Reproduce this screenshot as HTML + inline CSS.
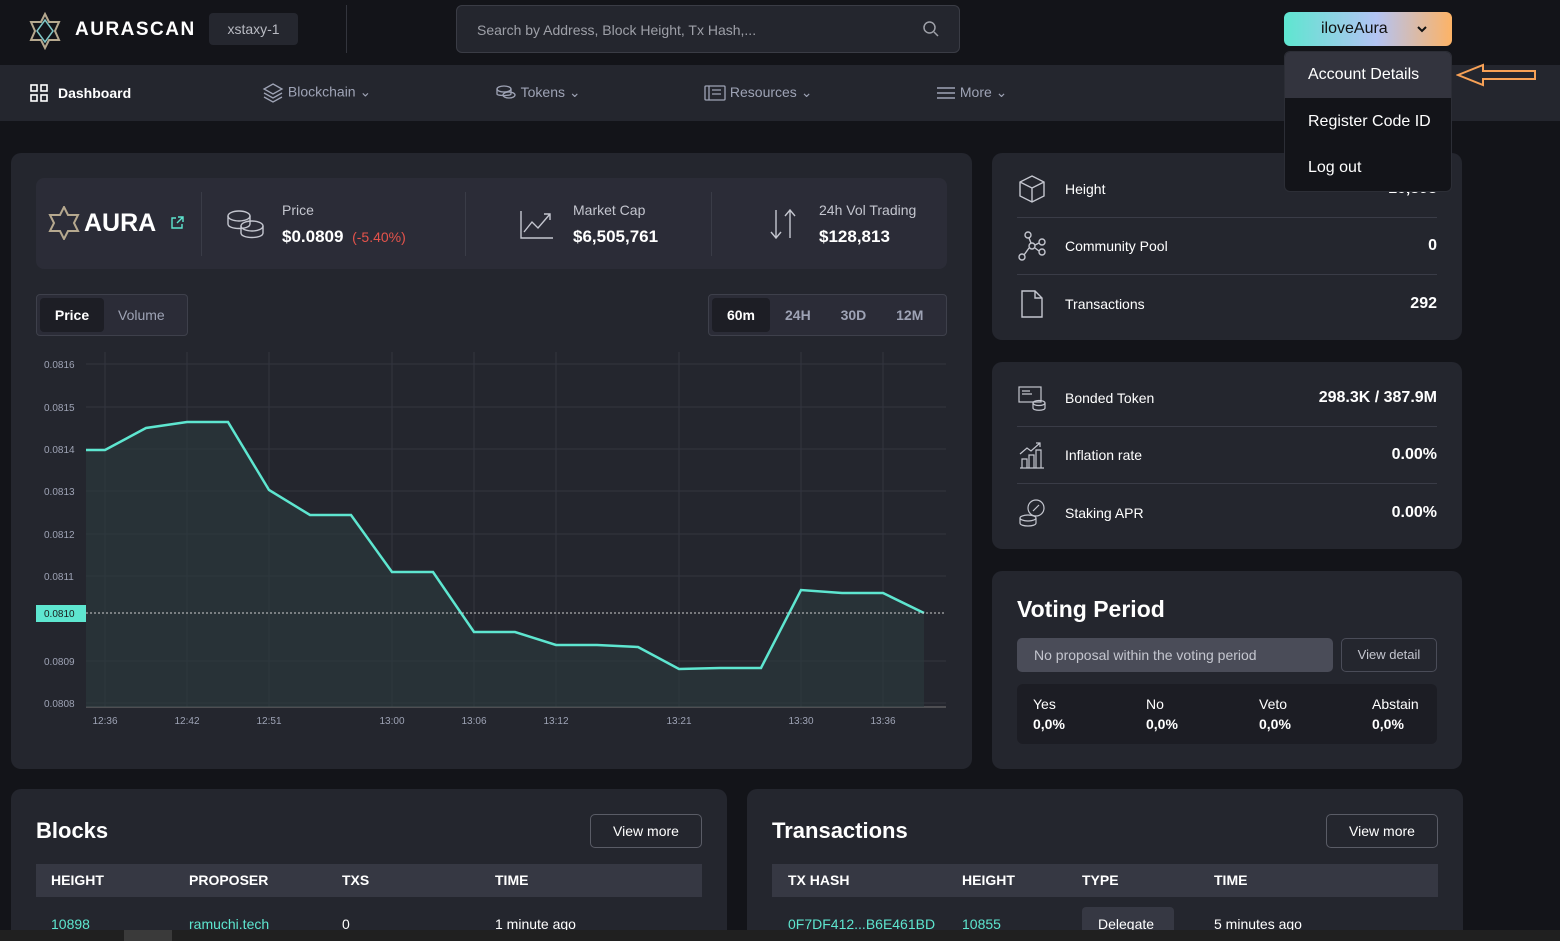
<!DOCTYPE html>
<html><head><meta charset="utf-8"><style>
*{box-sizing:border-box;margin:0;padding:0}
html,body{width:1560px;height:941px;overflow:hidden}
body{background:#131419;font-family:"Liberation Sans",sans-serif;color:#fff;position:relative}
.abs{position:absolute}
.card{position:absolute;background:#24262e;border-radius:10px}
.muted{color:#c4c6cf}
.row{position:absolute;left:25px;right:25px;height:57px;display:flex;align-items:center;font-size:14px;border-bottom:1px solid #3a3c47}
.row .v{margin-left:auto;font-weight:bold;font-size:16px}
.row svg{margin-right:18px}
.th{position:absolute;font-size:14px;font-weight:bold;top:872px}
.td{position:absolute;font-size:14px;top:916px}
.g{color:#5ee6d0}
</style></head><body>
<div class="abs" style="left:0;top:0;width:1560px;height:65px;background:#131419"></div>
<svg class="abs" style="left:27px;top:12px" width="36" height="38" viewBox="0 0 36 38"><path d="M18 2L22 10 32 10 28 19 32 28 22 28 18 36 14 28 4 28 8 19 4 10 14 10Z" fill="none" stroke="#b6a98f" stroke-width="2"/><path d="M18 8L26 19 18 30 10 19Z" fill="none" stroke="#7fc7c7" stroke-width="1.5"/></svg>
<div class="abs" style="left:75px;top:19px;font-size:19px;letter-spacing:1.5px;font-weight:bold">AURASCAN</div>
<div class="abs" style="left:209px;top:13px;width:89px;height:32px;background:#25272f;border-radius:4px;color:#b8bac2;font-size:14px;text-align:center;line-height:32px">xstaxy-1</div>
<div class="abs" style="left:346px;top:5px;width:1px;height:48px;background:#33353d"></div>
<div class="abs" style="left:456px;top:5px;width:504px;height:48px;background:#24262e;border:1px solid #3a3c45;border-radius:6px;color:#9ea0a8;font-size:14px;line-height:48px;padding-left:20px">Search by Address, Block Height, Tx Hash,...</div>
<svg class="abs" style="left:922px;top:20px" width="18" height="18" viewBox="0 0 18 18"><circle cx="7.5" cy="7.5" r="5.5" fill="none" stroke="#9ea0a8" stroke-width="1.5"/><path d="M12 12l4 4" stroke="#9ea0a8" stroke-width="1.5"/></svg>
<div class="abs" style="left:1284px;top:12px;width:168px;height:34px;border-radius:6px;background:linear-gradient(90deg,#5ee6d0,#b3c3f3 55%,#fdb366);color:#111;font-size:16px;line-height:34px;padding-left:37px">iloveAura</div>
<svg class="abs" style="left:1416px;top:24px" width="12" height="10" viewBox="0 0 12 10"><path d="M2 3l4 4 4-4" fill="none" stroke="#111" stroke-width="2"/></svg>
<div class="abs" style="left:0;top:65px;width:1560px;height:56px;background:#24262e"></div>
<svg class="abs" style="left:30px;top:84px" width="18" height="18" viewBox="0 0 18 18" fill="none" stroke="#fff" stroke-width="1.6"><rect x="1" y="1" width="6" height="6"/><rect x="11" y="1" width="6" height="6"/><rect x="1" y="11" width="6" height="6"/><rect x="11" y="11" width="6" height="6"/></svg>
<div class="abs" style="left:58px;top:85px;font-size:14px;font-weight:bold">Dashboard</div>
<div class="abs" style="left:262px;top:82px;color:#9ea3b5;font-size:14px">
<svg width="22" height="22" viewBox="0 0 22 22" fill="none" stroke="#9ea3b5" stroke-width="1.3" style="vertical-align:middle"><path d="M11 2L20 7 11 12 2 7Z M2 11l9 5 9-5 M2 15l9 5 9-5"/></svg> Blockchain &#8964;</div>
<div class="abs" style="left:495px;top:84px;color:#9ea3b5;font-size:14px"><svg width="22" height="18" viewBox="0 0 22 18" fill="none" stroke="#9ea3b5" stroke-width="1.3" style="vertical-align:middle"><ellipse cx="9" cy="5" rx="7" ry="3"/><path d="M2 5v5c0 2 14 2 14 0V5"/><ellipse cx="14" cy="11" rx="6" ry="3"/></svg> Tokens &#8964;</div>
<div class="abs" style="left:704px;top:84px;color:#9ea3b5;font-size:14px"><svg width="22" height="18" viewBox="0 0 22 18" fill="none" stroke="#9ea3b5" stroke-width="1.3" style="vertical-align:middle"><rect x="1" y="2" width="20" height="14" rx="1"/><path d="M5 2v14M8 6h9M8 10h9"/></svg> Resources &#8964;</div>
<div class="abs" style="left:936px;top:84px;color:#9ea3b5;font-size:14px"><svg width="20" height="16" viewBox="0 0 20 16" stroke="#9ea3b5" stroke-width="1.5" style="vertical-align:middle"><path d="M1 3h18M1 8h18M1 13h18"/></svg> More &#8964;</div>
<div class="abs" style="left:1284px;top:51px;width:168px;height:141px;background:#131419;border:1px solid #2c2e36;border-radius:6px;overflow:hidden;z-index:5;font-size:16px">
<div style="height:46px;background:#33343e;padding-left:23px;line-height:46px">Account Details</div>
<div style="height:48px;padding-left:23px;line-height:48px">Register Code ID</div>
<div style="height:48px;padding-left:23px;line-height:44px">Log out</div></div>
<svg class="abs" style="left:1456px;top:62px;z-index:6" width="82" height="26" viewBox="0 0 82 26"><path d="M2 13L27 3V9H79V17H27V23Z" fill="none" stroke="#f7a156" stroke-width="2"/></svg>
<div class="card" style="left:11px;top:153px;width:961px;height:616px"></div>
<div class="abs" style="left:36px;top:178px;width:911px;height:91px;background:#2b2c37;border-radius:8px"></div>
<svg class="abs" style="left:48px;top:206px" width="32" height="34" viewBox="0 0 32 34"><path d="M16 1L20 9 30 9 26 17 30 25 20 25 16 33 12 25 2 25 6 17 2 9 12 9Z" fill="none" stroke="#b6a98f" stroke-width="2"/></svg>
<div class="abs" style="left:84px;top:209px;font-size:25px;font-weight:bold">AURA</div>
<svg class="abs" style="left:170px;top:216px" width="14" height="14" viewBox="0 0 14 14" fill="none" stroke="#5ee6d0" stroke-width="1.4"><path d="M6 2H2v10h10V8M8 1h5v5M13 1L7 7"/></svg>
<div class="abs" style="left:201px;top:192px;width:1px;height:64px;background:#3a3c47"></div>
<div class="abs" style="left:465px;top:192px;width:1px;height:64px;background:#3a3c47"></div>
<div class="abs" style="left:711px;top:192px;width:1px;height:64px;background:#3a3c47"></div>
<svg class="abs" style="left:226px;top:208px" width="40" height="32" viewBox="0 0 40 32" fill="none" stroke="#c4c6cf" stroke-width="1.4"><ellipse cx="13" cy="8" rx="11" ry="5"/><path d="M2 8v8c0 6 22 6 22 0V8"/><ellipse cx="26" cy="18" rx="11" ry="5"/><path d="M15 18v7c0 6 22 6 22 0v-7"/></svg>
<div class="abs muted" style="left:282px;top:202px;font-size:14px">Price</div>
<div class="abs" style="left:282px;top:227px;font-size:17px;font-weight:bold">$0.0809 <span style="color:#e5534b;font-weight:normal;font-size:14px">&nbsp;(-5.40%)</span></div>
<svg class="abs" style="left:520px;top:210px" width="34" height="30" viewBox="0 0 34 30" fill="none" stroke="#c4c6cf" stroke-width="1.4"><path d="M1 1v27h32M4 22l8-10 6 6 12-14M24 4h6v6"/></svg>
<div class="abs muted" style="left:573px;top:202px;font-size:14px">Market Cap</div>
<div class="abs" style="left:573px;top:227px;font-size:17px;font-weight:bold">$6,505,761</div>
<svg class="abs" style="left:768px;top:208px" width="30" height="32" viewBox="0 0 30 32" fill="none" stroke="#c4c6cf" stroke-width="1.4"><path d="M8 2v28M3 24l5 6 5-6M22 30V2M17 8l5-6 5 6"/></svg>
<div class="abs muted" style="left:819px;top:202px;font-size:14px">24h Vol Trading</div>
<div class="abs" style="left:819px;top:227px;font-size:17px;font-weight:bold">$128,813</div>
<div class="abs" style="left:36px;top:294px;width:152px;height:42px;background:#2b2c37;border:1px solid #3e404b;border-radius:4px"></div>
<div class="abs" style="left:40px;top:298px;width:64px;height:34px;background:#1d1e25;border-radius:4px;text-align:center;line-height:34px;font-size:14px;font-weight:bold">Price</div>
<div class="abs" style="left:118px;top:307px;font-size:14px;color:#9ea3b5">Volume</div>
<div class="abs" style="left:708px;top:294px;width:239px;height:42px;background:#2b2c37;border:1px solid #3e404b;border-radius:4px"></div>
<div class="abs" style="left:712px;top:298px;width:58px;height:34px;background:#1d1e25;border-radius:4px;text-align:center;line-height:34px;font-size:14px;font-weight:bold">60m</div>
<div class="abs" style="left:785px;top:307px;font-size:14px;color:#9ea3b5;font-weight:bold;word-spacing:26px">24H 30D 12M</div>
<svg class="abs" style="left:0;top:340px" width="972" height="400" viewBox="0 340 972 400" font-family="Liberation Sans" font-size="10" fill="#9ea3b5">
<g stroke="#33353f" stroke-width="1">
<path d="M86 364H946M86 407H946M86 449H946M86 491H946M86 534H946M86 576H946M86 661H946M86 703H946"/>
<path d="M105 352V707M187 352V707M269 352V707M392 352V707M474 352V707M556 352V707M679 352V707M801 352V707M883 352V707"/>
</g>
<path d="M86 707H946" stroke="#777" />
<text x="44" y="368">0.0816</text><text x="44" y="411">0.0815</text><text x="44" y="453">0.0814</text><text x="44" y="495">0.0813</text><text x="44" y="538">0.0812</text><text x="44" y="580">0.0811</text><text x="44" y="665">0.0809</text><text x="44" y="707">0.0808</text>
<path d="M86 450L105 450 146 428 187 422 228 422 269 490 310 515 351 515 392 572 433 572 474 632 515 632 556 645 597 645 638 647 679 669 720 668 761 668 801 590 842 593 883 593 924 613V707H86Z" fill="#2c3a3e" opacity="0.6"/>
<path d="M86 450L105 450 146 428 187 422 228 422 269 490 310 515 351 515 392 572 433 572 474 632 515 632 556 645 597 645 638 647 679 669 720 668 761 668 801 590 842 593 883 593 924 613" fill="none" stroke="#5ee6d0" stroke-width="2.5"/>
<path d="M86 613H946" stroke="#ccc" stroke-dasharray="2 2"/>
<rect x="36" y="605" width="50" height="17" fill="#5ee6d0"/><text x="44" y="617" fill="#1a1a1a">0.0810</text>
<g text-anchor="middle"><text x="105" y="724">12:36</text><text x="187" y="724">12:42</text><text x="269" y="724">12:51</text><text x="392" y="724">13:00</text><text x="474" y="724">13:06</text><text x="556" y="724">13:12</text><text x="679" y="724">13:21</text><text x="801" y="724">13:30</text><text x="883" y="724">13:36</text></g>
</svg>
<div class="card" style="left:992px;top:153px;width:470px;height:187px">
<div class="row" style="top:8px"><svg width="30" height="30" viewBox="0 0 30 30" fill="none" stroke="#c4c6cf" stroke-width="1.4"><path d="M15 2L27 8V22L15 28 3 22V8Z M3 8l12 6 12-6 M15 14v14"/></svg>Height<span class="v">10,898</span></div>
<div class="row" style="top:65px"><svg width="30" height="30" viewBox="0 0 30 30" fill="none" stroke="#c4c6cf" stroke-width="1.4"><circle cx="15" cy="15" r="3"/><circle cx="11" cy="4" r="3"/><circle cx="25" cy="11" r="3"/><circle cx="25" cy="21" r="3"/><circle cx="5" cy="26" r="3"/><path d="M12 7l2 5M18 14l4-2M18 17l4 3M12 17l-5 7"/></svg>Community Pool<span class="v">0</span></div>
<div class="row" style="top:122px;border:none"><svg width="30" height="30" viewBox="0 0 30 30" fill="none" stroke="#c4c6cf" stroke-width="1.4"><path d="M5 2h13l7 7v19H5Z M18 2v7h7"/></svg>Transactions<span class="v">292</span></div>
</div>
<div class="card" style="left:992px;top:362px;width:470px;height:187px">
<div class="row" style="top:8px"><svg width="30" height="30" viewBox="0 0 30 30" fill="none" stroke="#c4c6cf" stroke-width="1.2"><rect x="2" y="4" width="22" height="15"/><path d="M5 8h8M5 11h10"/><ellipse cx="22" cy="20" rx="6" ry="2.5"/><path d="M16 20v5c0 3 12 3 12 0v-5"/></svg>Bonded Token<span class="v">298.3K / 387.9M</span></div>
<div class="row" style="top:65px"><svg width="30" height="30" viewBox="0 0 30 30" fill="none" stroke="#c4c6cf" stroke-width="1.2"><path d="M3 28h24M5 28V19h5v9M12 28V15h5v13M19 28V10h5v18M3 14l7-6 4 3 9-8M19 3h4v4"/></svg>Inflation rate<span class="v">0.00%</span></div>
<div class="row" style="top:122px;border:none"><svg width="30" height="30" viewBox="0 0 30 30" fill="none" stroke="#c4c6cf" stroke-width="1.2"><circle cx="19" cy="10" r="8"/><path d="M16 13l6-6"/><ellipse cx="11" cy="20" rx="8" ry="3"/><path d="M3 20v5c0 4 16 4 16 0v-5"/></svg>Staking APR<span class="v">0.00%</span></div>
</div>
<div class="card" style="left:992px;top:571px;width:470px;height:198px"></div>
<div class="abs" style="left:1017px;top:596px;font-size:23px;font-weight:bold">Voting Period</div>
<div class="abs" style="left:1017px;top:638px;width:316px;height:34px;background:#4a4c58;border-radius:5px;color:#c4c6cf;font-size:14px;line-height:34px;padding-left:17px">No proposal within the voting period</div>
<div class="abs" style="left:1341px;top:638px;width:96px;height:34px;border:1px solid #4a4c58;border-radius:5px;color:#c4c6cf;font-size:13px;line-height:32px;text-align:center">View detail</div>
<div class="abs" style="left:1017px;top:684px;width:420px;height:60px;background:#1c1d24;border-radius:6px"></div>
<div class="abs" style="left:1033px;top:694px;font-size:14px;line-height:20px">Yes<br><b>0,0%</b></div>
<div class="abs" style="left:1146px;top:694px;font-size:14px;line-height:20px">No<br><b>0,0%</b></div>
<div class="abs" style="left:1259px;top:694px;font-size:14px;line-height:20px">Veto<br><b>0,0%</b></div>
<div class="abs" style="left:1372px;top:694px;font-size:14px;line-height:20px">Abstain<br><b>0,0%</b></div>
<div class="card" style="left:11px;top:789px;width:716px;height:152px;border-radius:10px 10px 0 0"></div>
<div class="abs" style="left:36px;top:818px;font-size:22px;font-weight:bold">Blocks</div>
<div class="abs" style="left:590px;top:814px;width:112px;height:34px;border:1px solid #5a5c66;border-radius:5px;font-size:14px;text-align:center;line-height:32px">View more</div>
<div class="abs" style="left:36px;top:864px;width:666px;height:33px;background:#363843"></div>
<div class="th" style="left:51px">HEIGHT</div><div class="th" style="left:189px">PROPOSER</div><div class="th" style="left:342px">TXS</div><div class="th" style="left:495px">TIME</div>
<div class="td g" style="left:51px">10898</div><div class="td g" style="left:189px">ramuchi.tech</div><div class="td" style="left:342px">0</div><div class="td" style="left:495px">1 minute ago</div>
<div class="card" style="left:747px;top:789px;width:716px;height:152px;border-radius:10px 10px 0 0"></div>
<div class="abs" style="left:772px;top:818px;font-size:22px;font-weight:bold">Transactions</div>
<div class="abs" style="left:1326px;top:814px;width:112px;height:34px;border:1px solid #5a5c66;border-radius:5px;font-size:14px;text-align:center;line-height:32px">View more</div>
<div class="abs" style="left:772px;top:864px;width:666px;height:33px;background:#363843"></div>
<div class="th" style="left:788px">TX HASH</div><div class="th" style="left:962px">HEIGHT</div><div class="th" style="left:1082px">TYPE</div><div class="th" style="left:1214px">TIME</div>
<div class="abs" style="left:1082px;top:907px;width:92px;height:30px;background:#363843;border-radius:4px"></div>
<div class="td g" style="left:788px">0F7DF412...B6E461BD</div><div class="td g" style="left:962px">10855</div><div class="td" style="left:1098px">Delegate</div><div class="td" style="left:1214px">5 minutes ago</div>
<div class="abs" style="left:0;top:930px;width:1560px;height:11px;background:#202020;z-index:9"></div>
<div class="abs" style="left:124px;top:930px;width:48px;height:11px;background:#3a3a3a;z-index:10"></div>
</body></html>
